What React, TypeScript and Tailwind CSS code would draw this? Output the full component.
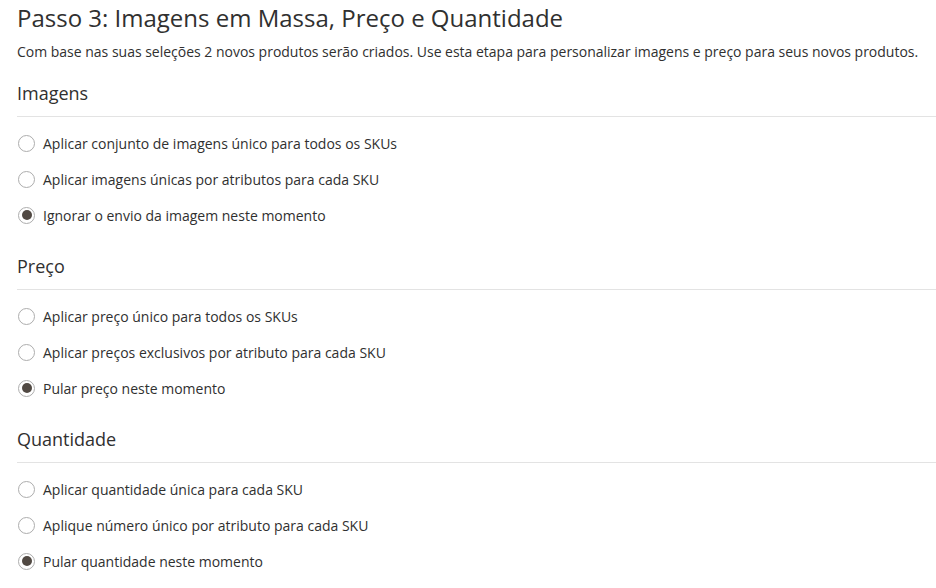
import { useState } from "react";

type Section = {
  title: string;
  name: string;
  options: string[];
};

const SECTIONS: Section[] = [
  {
    title: "Imagens",
    name: "images",
    options: [
      "Aplicar conjunto de imagens único para todos os SKUs",
      "Aplicar imagens únicas por atributos para cada SKU",
      "Ignorar o envio da imagem neste momento",
    ],
  },
  {
    title: "Preço",
    name: "price",
    options: [
      "Aplicar preço único para todos os SKUs",
      "Aplicar preços exclusivos por atributo para cada SKU",
      "Pular preço neste momento",
    ],
  },
  {
    title: "Quantidade",
    name: "qty",
    options: [
      "Aplicar quantidade única para cada SKU",
      "Aplique número único por atributo para cada SKU",
      "Pular quantidade neste momento",
    ],
  },
];

function Radio({ checked }: { checked: boolean }) {
  return (
    <span className="flex h-[17px] w-[17px] shrink-0 items-center justify-center rounded-full border border-[#adadad] bg-white">
      {checked && <span className="h-[10px] w-[10px] rounded-full bg-[#514943]" />}
    </span>
  );
}

export default function App() {
  const [values, setValues] = useState<Record<string, number>>({
    images: 2,
    price: 2,
    qty: 2,
  });

  return (
    <div
      className="min-h-screen bg-white pl-[17px] pt-[3px] text-[#303030]"
      style={{ fontFamily: '"Open Sans", sans-serif' }}
    >
      <h2 className="text-[24px] leading-[30px] font-normal">
        Passo 3: Imagens em Massa, Preço e Quantidade
      </h2>
      <p className="mt-[9px] text-[14px] leading-[20px] tracking-[-0.01px]">
        Com base nas suas seleções 2 novos produtos serão criados. Use esta etapa para personalizar imagens e preço para seus novos produtos.
      </p>

      <div className="mt-[20px] flex flex-col gap-[22px]">
        {SECTIONS.map((s) => (
          <div key={s.name}>
            <h3 className="border-b border-[#e3e3e3] pb-[12px] text-[18px] leading-[22px] font-normal">
              {s.title}
            </h3>
            <ul className="mt-[8px]">
              {s.options.map((opt, i) => (
                <li key={opt}>
                  <label
                    className="flex h-[36px] cursor-pointer items-center gap-[8px] pl-px text-[14px]"
                    onClick={() => setValues({ ...values, [s.name]: i })}
                  >
                    <Radio checked={values[s.name] === i} />
                    <span>{opt}</span>
                  </label>
                </li>
              ))}
            </ul>
          </div>
        ))}
      </div>
    </div>
  );
}
